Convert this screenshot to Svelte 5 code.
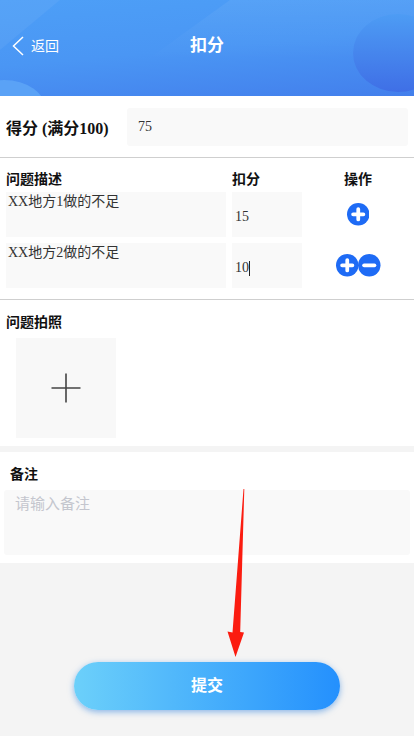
<script lang="ts">
  const rows = [
    { desc: 'XX地方1做的不足', score: '15', focused: false, removable: false },
    { desc: 'XX地方2做的不足', score: '10', focused: true, removable: true }
  ];
</script>

<div class="page">
  <header class="topbar">
    <span class="sheen sheen-a"></span>
    <span class="sheen sheen-b"></span>
    <span class="blob blob-right"></span>
    <span class="blob blob-left"></span>
    <div class="back">
      <svg width="12" height="20" viewBox="0 0 12 20" fill="none" stroke="#fff" stroke-width="1.5">
        <path d="M11 1L1.5 10l9.5 9"/>
      </svg>
      <span>返回</span>
    </div>
    <h1>扣分</h1>
  </header>

  <section class="score-section">
    <div class="score-row">
      <span class="score-label">得分 (满分100)</span>
      <div class="score-input">75</div>
    </div>
  </section>

  <section class="table-section">
    <div class="table-head">
      <span class="col-desc">问题描述</span>
      <span class="col-score">扣分</span>
      <span class="col-ops">操作</span>
    </div>
    {#each rows as row}
      <div class="table-row">
        <div class="col-desc cell-desc">{row.desc}</div>
        <div class="col-score cell-score">{row.score}{#if row.focused}<i class="caret"></i>{/if}</div>
        <div class="col-ops cell-ops">
          <svg class="op" viewBox="0 0 24 24">
            <circle cx="12" cy="12" r="12" fill="#1e6bf5"/>
            <path d="M12 6.5v11M6.5 12h11" stroke="#fff" stroke-width="4" stroke-linecap="round"/>
          </svg>
          {#if row.removable}
            <svg class="op" viewBox="0 0 24 24">
              <circle cx="12" cy="12" r="12" fill="#1e6bf5"/>
              <path d="M6.5 12h11" stroke="#fff" stroke-width="4" stroke-linecap="round"/>
            </svg>
          {/if}
        </div>
      </div>
    {/each}
  </section>

  <section class="photo-section">
    <div class="section-title">问题拍照</div>
    <div class="photo-box">
      <svg width="30" height="30" viewBox="0 0 30 30" stroke="#444" stroke-width="1.6">
        <path d="M15 0.5v29M0.5 15h29"/>
      </svg>
    </div>
  </section>

  <section class="remark-section">
    <div class="remark-title">备注</div>
    <div class="remark-input">请输入备注</div>
  </section>

  <div class="footer">
    <button class="submit">提交</button>
  </div>

  <svg class="arrow" width="24" height="172" viewBox="0 0 24 172">
    <path d="M17.5 0L18.3 0L14.2 143L18 143.5L9.5 168L1.5 142.5L6.5 143.5Z" fill="#fb1c10"/>
  </svg>
</div>

<style>
  :global(body) {
    margin: 0;
    background: #f4f4f4;
  }

  .page {
    position: relative;
    height: 736px;
    overflow: hidden;
    background: #f4f4f4;
    font-family: "Liberation Serif", "Noto Sans CJK SC", serif;
    color: #111;
  }

  .topbar {
    position: relative;
    height: 96px;
    overflow: hidden;
    display: flex;
    align-items: center;
    justify-content: center;
    background: linear-gradient(175deg, #4d9ff7 0%, #4a96f4 50%, #437fec 100%);
    color: #fff;
  }

  .blob {
    position: absolute;
    border-radius: 50%;
  }

  .blob-right {
    left: 353px;
    top: 14px;
    width: 90px;
    height: 78px;
    background: linear-gradient(180deg, #4d9cf4 0%, #3f6fe6 100%);
  }

  .blob-left {
    left: -38px;
    top: 80px;
    width: 84px;
    height: 60px;
    background: #5aa2f6;
  }

  .sheen {
    position: absolute;
    top: 0;
    height: 60px;
  }

  .sheen-a {
    left: 0;
    width: 60px;
    background: rgba(255, 255, 255, 0.05);
    clip-path: polygon(0 0, 60px 0, 0 50px);
  }

  .sheen-b {
    left: 147px;
    width: 267px;
    background: linear-gradient(180deg, rgba(255, 255, 255, 0.06), rgba(255, 255, 255, 0));
    clip-path: polygon(83px 0, 267px 0, 267px 60px, 0 60px);
  }

  .back {
    position: absolute;
    left: 12px;
    top: 34px;
    display: flex;
    align-items: center;
    gap: 7px;
    font-family: "Noto Sans CJK SC", sans-serif;
    font-size: 14px;
  }

  .back svg {
    margin-top: 2px;
  }

  h1 {
    position: relative;
    margin: 0 0 8px;
    font-family: "Noto Sans CJK SC", sans-serif;
    font-size: 17px;
    font-weight: 700;
    line-height: 24px;
  }

  .score-section {
    height: 62px;
    padding-top: 12px;
    box-sizing: border-box;
    background: #fff;
    border-bottom: 1px solid #cfcfcf;
  }

  .score-row {
    display: flex;
    align-items: center;
    padding: 0 6px;
  }

  .score-label {
    width: 121px;
    font-size: 16px;
    font-weight: 700;
    white-space: nowrap;
  }

  .score-input {
    width: 281px;
    height: 38px;
    line-height: 38px;
    padding-left: 11px;
    box-sizing: border-box;
    background: #f9f9f9;
    border-radius: 3px;
    font-size: 14px;
    color: #333;
  }

  .table-section {
    height: 142px;
    padding: 12px 0 0 6px;
    box-sizing: border-box;
    background: #fff;
    border-bottom: 1px solid #cfcfcf;
  }

  .table-head {
    display: flex;
    gap: 6px;
    height: 22px;
    line-height: 16px;
    font-family: "Noto Sans CJK SC", sans-serif;
    font-size: 14px;
    font-weight: 700;
  }

  .table-row {
    display: flex;
    gap: 6px;
    height: 45px;
    margin-bottom: 6px;
  }

  .col-desc {
    width: 220px;
    flex: none;
  }

  .col-score {
    width: 70px;
    flex: none;
  }

  .col-ops {
    width: 100px;
    flex: none;
    text-align: center;
  }

  .cell-desc {
    background: #f9f9f9;
    padding-left: 2px;
    box-sizing: border-box;
    font-size: 14px;
    line-height: 20px;
    color: #333;
  }

  .cell-score {
    display: flex;
    align-items: center;
    padding: 5px 0 0 3px;
    box-sizing: border-box;
    background: #f9f9f9;
    font-size: 14px;
    color: #333;
  }

  .caret {
    display: block;
    width: 1px;
    height: 15px;
    background: #222;
  }

  .cell-ops {
    display: flex;
    align-items: center;
    justify-content: center;
  }

  .op {
    display: block;
    width: 22.5px;
    height: 22.5px;
  }

  .photo-section {
    height: 146px;
    padding-top: 13px;
    box-sizing: border-box;
    background: #fff;
  }

  .section-title {
    padding-left: 6px;
    height: 25px;
    line-height: 16px;
    font-family: "Noto Sans CJK SC", sans-serif;
    font-size: 14px;
    font-weight: 700;
  }

  .photo-box {
    display: flex;
    align-items: center;
    justify-content: center;
    width: 100px;
    height: 100px;
    margin-left: 16px;
    background: #f8f8f8;
  }

  .remark-section {
    height: 111px;
    margin-top: 6px;
    padding-top: 13px;
    box-sizing: border-box;
    background: #fff;
  }

  .remark-title {
    padding-left: 10px;
    height: 25px;
    line-height: 16px;
    font-family: "Noto Sans CJK SC", sans-serif;
    font-size: 14px;
    font-weight: 700;
  }

  .remark-input {
    width: 406px;
    height: 65px;
    margin-left: 4px;
    padding: 2px 0 0 11px;
    box-sizing: border-box;
    background: #f9f9f9;
    border-radius: 3px;
    font-family: "Noto Sans CJK SC", sans-serif;
    font-size: 15px;
    line-height: 22px;
    color: #c4c6ce;
  }

  .footer {
    display: flex;
    justify-content: center;
    padding-top: 99px;
  }

  .submit {
    width: 266px;
    height: 48px;
    padding: 0 0 4px;
    border: 0;
    border-radius: 24px;
    background: linear-gradient(90deg, #6cd0fa 0%, #2490fd 100%);
    box-shadow: 0 2px 6px rgba(50, 130, 220, 0.55);
    color: #fff;
    font-family: "Noto Sans CJK SC", sans-serif;
    font-size: 16px;
    font-weight: 700;
  }

  .arrow {
    position: absolute;
    left: 226px;
    top: 489px;
  }
</style>
